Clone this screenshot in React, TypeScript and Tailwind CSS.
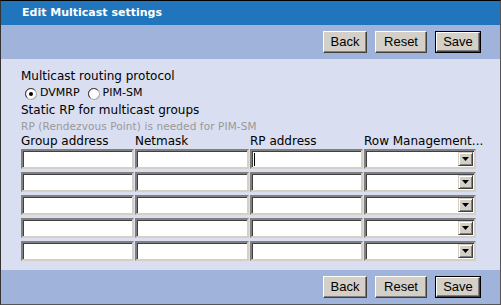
const rows = [0, 1, 2, 3, 4];

function Button({ label, primary }: { label: string; primary?: boolean }) {
  const inner = (
    <div className="flex h-full items-center justify-center border border-t-white border-l-white border-r-[#404040] border-b-[#404040] bg-[#d4d0c8] px-[8px] text-[13px] text-black shadow-[inset_-1px_-1px_0_#808080] font-['Liberation_Sans',sans-serif]">
      {label}
    </div>
  );
  if (primary) {
    return <div className="h-[22px] border border-black">{inner}</div>;
  }
  return <div className="h-[22px]">{inner}</div>;
}

function ButtonBar() {
  return (
    <div className="flex h-[34px] items-center justify-end gap-[8px] bg-[#9fb3db] pr-[19px]">
      <div className="w-[44px]"><Button label="Back" /></div>
      <div className="w-[52px]"><Button label="Reset" /></div>
      <div className="w-[46px]"><Button label="Save" primary /></div>
    </div>
  );
}

function TextBox({ caret }: { caret?: boolean }) {
  return (
    <div className="relative h-[20px] border-2 border-t-[#808080] border-l-[#808080] border-r-[#d4d0c8] border-b-[#d4d0c8] bg-white shadow-[inset_1px_1px_0_#404040]">
      {caret && <span className="absolute left-[2px] top-[2px] h-[13px] w-px bg-black" />}
    </div>
  );
}

function SelectBox() {
  return (
    <div className="flex h-[20px] justify-end border-2 border-t-[#808080] border-l-[#808080] border-r-[#d4d0c8] border-b-[#d4d0c8] bg-white p-px shadow-[inset_1px_1px_0_#404040]">
      <div className="flex w-[15px] items-center justify-center border border-t-[#d4d0c8] border-l-[#d4d0c8] border-r-[#404040] border-b-[#404040] bg-[#d4d0c8] shadow-[inset_1px_1px_0_#fff,inset_-1px_-1px_0_#808080]">
        <svg width="7" height="4" viewBox="0 0 7 4">
          <path d="M0 0h7L3.5 4z" fill="#000" />
        </svg>
      </div>
    </div>
  );
}

function Radio({ checked }: { checked?: boolean }) {
  return (
    <svg width="12" height="12" viewBox="0 0 12 12">
      <circle cx="6" cy="6" r="5.5" fill="#fff" stroke="#808080" />
      <path d="M2 9.5A5 5 0 0 1 9.5 2" stroke="#404040" fill="none" />
      <path d="M10.5 3A5 5 0 0 1 3 10.5" stroke="#d4d0c8" fill="none" />
      {checked && <circle cx="6" cy="6" r="2" fill="#000" />}
    </svg>
  );
}

export default function App() {
  return (
    <div className="h-[305px] w-[501px] border-t border-t-black border-r border-r-[#555] border-b border-b-[#555] border-l border-l-[#333] bg-[#d9def0] font-['DejaVu_Sans',sans-serif] flex flex-col">
      <div className="flex h-[24px] items-center bg-[#2175bc] pl-[21px] text-[11px] font-bold text-white">
        Edit Multicast settings
      </div>
      <ButtonBar />
      <div className="flex flex-1 flex-col px-[20px] pt-[8px] text-[12px] text-black">
        <div className="h-[18px] leading-[18px]">Multicast routing protocol</div>
        <div className="flex h-[17px] items-center gap-[3px] pl-[4px] text-[11px]">
          <Radio checked />
          <span className="mr-[5px]">DVMRP</span>
          <Radio />
          <span>PIM-SM</span>
        </div>
        <div className="h-[17px] leading-[17px]">Static RP for multicast groups</div>
        <div className="h-[15px] text-[10.5px] leading-[15px] tracking-[0.1px] text-[#999]">RP (Rendezvous Point) is needed for PIM-SM</div>
        <div className="grid h-[15px] grid-cols-[113px_114px_113px_112px] gap-x-[1px] leading-[15px]">
          <div>Group address</div>
          <div>Netmask</div>
          <div>RP address</div>
          <div className="whitespace-nowrap">Row Management...</div>
        </div>
        <div className="grid grid-cols-[113px_114px_113px_112px] gap-x-[1px] gap-y-[3px]">
          {rows.map((r) => (
            <div key={r} className="contents">
              <TextBox />
              <TextBox />
              <TextBox caret={r === 0} />
              <SelectBox />
            </div>
          ))}
        </div>
      </div>
      <ButtonBar />
    </div>
  );
}
